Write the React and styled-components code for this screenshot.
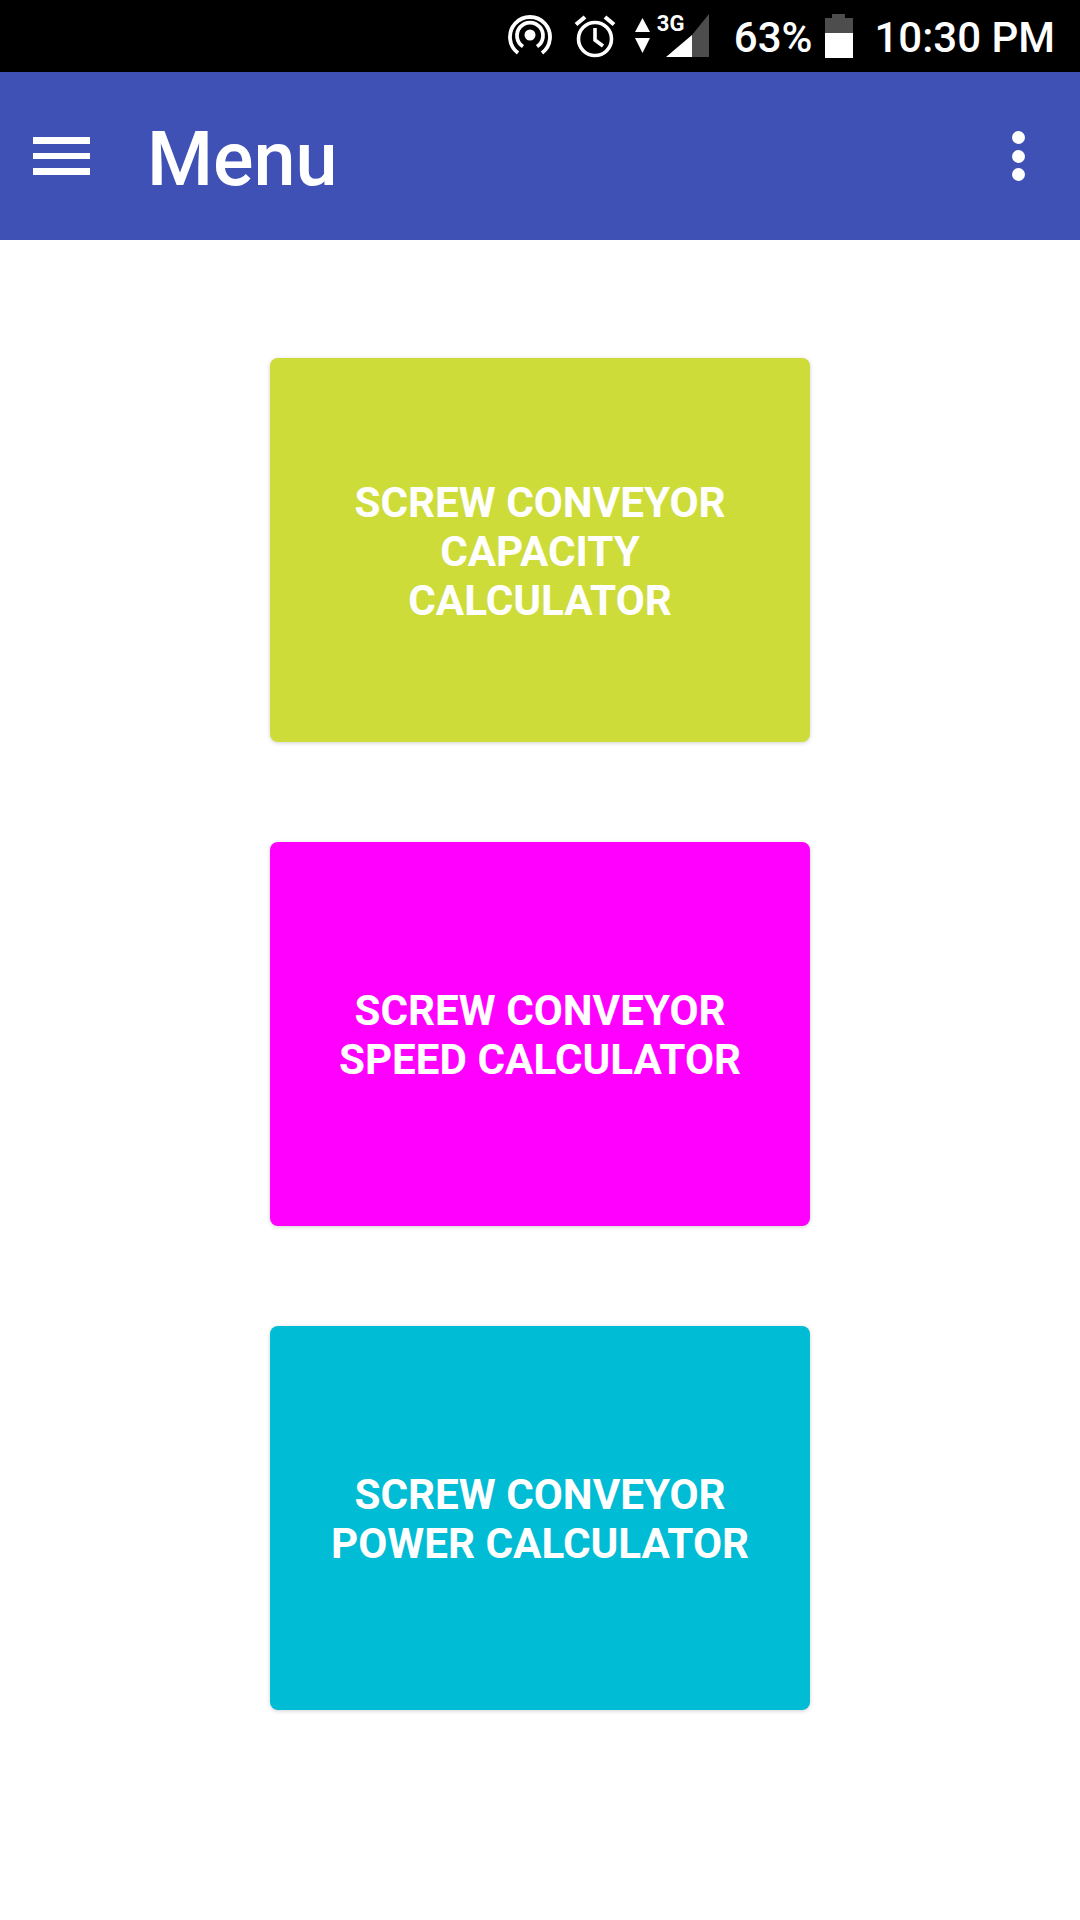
import React from 'react';
import styled, { createGlobalStyle } from 'styled-components';

const GlobalStyle = createGlobalStyle`
  html, body {
    margin: 0;
    padding: 0;
    background: #ffffff;
    font-family: Roboto, "Liberation Sans", sans-serif;
  }
`;

const Screen = styled.div`
  width: 1080px;
  height: 1920px;
  display: flex;
  flex-direction: column;
  overflow: hidden;
  background: #ffffff;
`;

const StatusBar = styled.div`
  height: 72px;
  flex: none;
  background: #000000;
  color: #ffffff;
  display: flex;
  align-items: center;
  justify-content: flex-end;
  padding-right: 25px;
`;

const StatusText = styled.span`
  font-size: 42px;
  line-height: 72px;
  font-weight: 500;
  margin-left: ${props => props.$gap}px;
  position: relative;
  top: 2px;
`;

const StatusIcon = styled.svg`
  display: block;
  flex: none;
  margin-left: ${props => props.$gap || 0}px;
`;

const SignalWrap = styled.div`
  position: relative;
  margin-left: 16px;
  width: 43px;
  height: 44px;
`;

const NetworkLabel = styled.span`
  position: absolute;
  left: -9px;
  top: -1px;
  font-size: 22px;
  line-height: 22px;
  font-weight: 700;
`;

const AppBar = styled.header`
  height: 168px;
  flex: none;
  background: #3f51b5;
  color: #ffffff;
  display: flex;
  align-items: center;
  padding: 0 55px 0 33px;
`;

const MenuButton = styled.div`
  width: 57px;
  display: flex;
  flex-direction: column;
  gap: 9px;
`;

const MenuBar = styled.span`
  display: block;
  height: 6.5px;
  background: #ffffff;
`;

const Title = styled.h1`
  flex: 1;
  margin: 0 0 0 57px;
  padding-top: 5px;
  font-size: 75.5px;
  line-height: 88px;
  font-weight: 500;
`;

const Overflow = styled.div`
  display: flex;
  flex-direction: column;
  gap: 5.5px;
`;

const Dot = styled.span`
  display: block;
  width: 13px;
  height: 13px;
  border-radius: 50%;
  background: #ffffff;
`;

const Content = styled.main`
  flex: 1;
  display: flex;
  flex-direction: column;
  align-items: center;
  gap: 100px;
  padding-top: 118px;
`;

const CalcButton = styled.div`
  width: 540px;
  height: 384px;
  box-sizing: border-box;
  padding: 2px 40px 0;
  border-radius: 8px;
  background: ${props => props.$color};
  color: #ffffff;
  box-shadow: 0 1px 4px rgba(0, 0, 0, 0.18);
  display: flex;
  align-items: center;
  justify-content: center;
  text-align: center;
  font-size: 42.2px;
  line-height: 49px;
  font-weight: 700;
  text-transform: uppercase;
`;

const buttons = [
  { color: '#cddc39', lines: ['Screw Conveyor', 'Capacity', 'Calculator'] },
  { color: '#ff00ff', lines: ['Screw Conveyor', 'Speed Calculator'] },
  { color: '#00bcd4', lines: ['Screw Conveyor', 'Power Calculator'] },
];

const App = () => {
  return (
    <Screen>
      <GlobalStyle />
      <StatusBar>
        <StatusIcon width="44" height="44" viewBox="0 0 44 44" fill="none" stroke="#fff" strokeWidth="3.8">
          <circle cx="22" cy="21" r="5.5" fill="#fff" stroke="none" />
          <path d="M15 32.500 A13 13 0 1 1 29 32.500" />
          <path d="M10 39 A20 20 0 1 1 34 39" />
        </StatusIcon>
        <StatusIcon $gap={22} width="42" height="44" viewBox="0 0 42 44" fill="none" stroke="#fff" strokeWidth="3.6">
          <circle cx="21" cy="25" r="16.500" />
          <path d="M21 14 V26 L29 32" />
          <path d="M2 10.500 L11 3 M31 3 L40 10.500" strokeWidth="4.200" />
        </StatusIcon>
        <StatusIcon $gap={19} width="15" height="36" viewBox="0 0 15 36" fill="#fff">
          <path d="M7.500 0 L15 14 H0 Z" />
          <path d="M0 20 H15 L7.500 35 Z" />
        </StatusIcon>
        <SignalWrap>
          <NetworkLabel>3G</NetworkLabel>
          <StatusIcon width="43" height="44" viewBox="0 0 43 44">
            <path d="M0 43 L26 21 V43 Z" fill="#fff" />
            <path d="M26 21 L43 0 V43 H26 Z" fill="#4d4d4d" />
          </StatusIcon>
        </SignalWrap>
        <StatusText $gap={25}>63%</StatusText>
        <StatusIcon $gap={13} width="28" height="44" viewBox="0 0 28 44">
          <path d="M7 0 H20 V4 H28 V19 H0 V4 H7 Z" fill="#4d4d4d" />
          <rect x="0" y="19" width="28" height="25" fill="#fff" />
        </StatusIcon>
        <StatusText $gap={21}>10:30 PM</StatusText>
      </StatusBar>
      <AppBar>
        <MenuButton>
          <MenuBar />
          <MenuBar />
          <MenuBar />
        </MenuButton>
        <Title>Menu</Title>
        <Overflow>
          <Dot />
          <Dot />
          <Dot />
        </Overflow>
      </AppBar>
      <Content>
        {buttons.map(item => (
          <CalcButton key={item.color} $color={item.color}>
            <div>
              {item.lines.map(line => (
                <div key={line}>{line}</div>
              ))}
            </div>
          </CalcButton>
        ))}
      </Content>
    </Screen>
  );
};

export default App;
